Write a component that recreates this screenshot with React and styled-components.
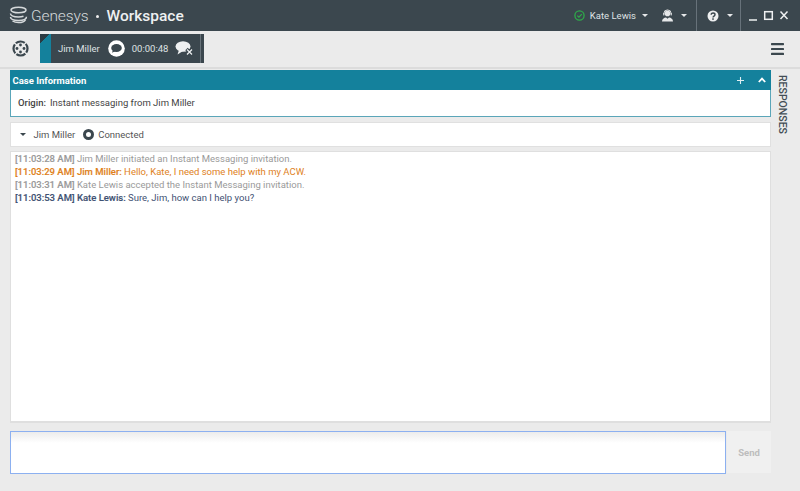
import React from "react";
import styled, { createGlobalStyle } from "styled-components";

const Global = createGlobalStyle`
  html, body {
    margin: 0;
    padding: 0;
    background: #ebebeb;
  }
  * {
    box-sizing: border-box;
  }
  body {
    font-family: Roboto, "Liberation Sans", sans-serif;
    font-size: 9.5px;
    overflow: hidden;
  }
`;

const Page = styled.div`
  width: 800px;
  height: 491px;
  display: flex;
  flex-direction: column;
  background: #ebebeb;
`;

const TopBar = styled.header`
  height: 31px;
  flex: none;
  display: flex;
  align-items: stretch;
  background: #3b474e;
  color: #e6e8e9;
`;

const Brand = styled.div`
  display: flex;
  align-items: center;
  padding-left: 9px;
  flex: 1;
`;

const BrandName = styled.span`
  font-size: 15.5px;
  font-weight: 300;
  margin-left: 2px;
  color: #d5d9db;
  letter-spacing: -0.1px;
`;

const BrandDot = styled.span`
  width: 3px;
  height: 3px;
  border-radius: 50%;
  background: #eee;
  margin: 2px 8px 0 7px;
`;

const Product = styled.span`
  font-size: 15.5px;
  font-weight: 500;
  color: #eef0f1;
`;

const TopGroup = styled.div`
  display: flex;
  align-items: center;
  padding: 0 ${(p) => p.$right || 0}px 0 ${(p) => p.$left || 0}px;
  border-left: ${(p) => (p.$divided ? "1px solid #67727a" : "none")};
`;

const UserName = styled.span`
  font-size: 9.5px;
  font-weight: 400;
  color: #dfe2e4;
  margin: 0 6px 0 5px;
`;

const Caret = styled.span`
  display: inline-block;
  width: 0;
  height: 0;
  border-left: 3px solid transparent;
  border-right: 3px solid transparent;
  border-top: 3px solid ${(p) => p.$color || "#e6e8e9"};
  margin-left: ${(p) => p.$left || 0}px;
  margin-right: ${(p) => p.$right || 0}px;
`;

const ToolBar = styled.div`
  height: 38px;
  flex: none;
  display: flex;
  align-items: center;
  padding: 0 16px 1px 12px;
  background: #ebebeb;
  border-bottom: 2px solid #dcdcdc;
`;

const Interaction = styled.div`
  margin-left: 11px;
  height: 29px;
  width: 164px;
  display: flex;
  align-items: center;
  background: #3b474e;
  color: #dfe2e4;
  position: relative;
`;

const TealTab = styled.div`
  width: 11px;
  align-self: stretch;
  background: linear-gradient(135deg, #2b3a42 0 7px, #14819c 7px);
`;

const CallerName = styled.span`
  font-size: 9.5px;
  font-weight: 400;
  margin: 0 8px 0 7px;
`;

const Timer = styled.span`
  font-size: 9.5px;
  margin: 0 7px 0 7px;
`;

const TabEdge = styled.span`
  position: absolute;
  right: 3px;
  top: 0;
  bottom: 0;
  width: 1px;
  background: #68737a;
`;

const Spacer = styled.div`
  flex: 1;
`;

const Main = styled.div`
  flex: 1;
  display: flex;
  min-height: 0;
`;

const Content = styled.div`
  width: 771px;
  padding: 1px 0 17px 9.5px;
  display: flex;
  flex-direction: column;
`;

const CaseHeader = styled.div`
  height: 20px;
  flex: none;
  background: #14819c;
  color: #fff;
  font-size: 9.5px;
  font-weight: 700;
  display: flex;
  align-items: center;
  justify-content: space-between;
  padding: 0 5px 0 3px;
`;

const CaseBody = styled.div`
  height: 27px;
  flex: none;
  background: #fff;
  border: 1px solid #5ba6b9;
  border-top: none;
  color: #444;
  font-size: 9.5px;
  display: flex;
  align-items: center;
  padding: 0 0 1px 7.5px;
  margin-bottom: 5px;
`;

const OriginLabel = styled.b`
  font-weight: 500;
  margin-right: 4px;
`;

const HeaderActions = styled.div`
  display: flex;
  align-items: center;
  gap: 14px;
`;

const PartyRow = styled.div`
  height: 25px;
  flex: none;
  background: #fff;
  border: 1px solid #e0e0e0;
  color: #555;
  font-size: 9.5px;
  display: flex;
  align-items: center;
  padding: 0 0 1px 8px;
  margin-bottom: 4px;
`;

const PartyName = styled.span`
  margin: 0 8px 0 8px;
`;

const Ring = styled.span`
  width: 11px;
  height: 11px;
  border-radius: 50%;
  border: 3px solid #3b474e;
  margin-right: 4px;
`;

const Transcript = styled.div`
  height: 272px;
  flex: none;
  background: #fff;
  border: 1px solid #dfdfdf;
  border-bottom-width: 2px;
  padding: 0 4.5px;
  margin-bottom: 8px;
  font-size: 9.5px;
  line-height: 13px;
`;

const Line = styled.div`
  color: ${(p) => p.$color};
  height: 13px;
  white-space: nowrap;
`;

const Strong = styled.b`
  font-weight: 500;
  -webkit-text-stroke: 0.15px currentColor;
`;

const Composer = styled.div`
  display: flex;
  height: 43px;
  gap: 1px;
`;

const MessageBox = styled.div`
  width: 716.5px;
  background: linear-gradient(#ececec 0, #fff 11px);
  border: 1px solid #8cb0f0;
`;

const SendButton = styled.button`
  width: 44px;
  height: 42px;
  border: none;
  background: #f0f0f0;
  color: #bdbdbd;
  font-family: inherit;
  font-size: 9.5px;
  font-weight: 700;
  padding: 0;
`;

const ResponsesRail = styled.div`
  flex: 1;
  position: relative;
`;

const ResponsesLabel = styled.span`
  position: absolute;
  left: 5px;
  top: 6px;
  writing-mode: vertical-rl;
  font-size: 10.5px;
  font-weight: 500;
  color: #434e55;
`;

const LogoIcon = () => (
  <svg width="20" height="19" viewBox="0 0 20 19" fill="none" stroke="#d5d9db" strokeWidth="1.500">
    <ellipse cx="9.500" cy="4" rx="7.500" ry="2.800" />
    <path d="M1.500 7.500c0 2.200 3.500 3.400 8 3.400 2 0 3.500-.2 5-.7" />
    <path d="M1.500 11c0 2.200 3.500 3.400 8 3.400 3.500 0 8-1 8-3.700" />
    <path d="M3.500 15c1.500 1 3.500 1.600 6 1.600 3 0 6-1 7-3" />
  </svg>
);

const StatusIcon = () => (
  <svg width="11" height="11" viewBox="0 0 11 11" fill="none" stroke="#2eab4a" strokeWidth="1.300">
    <circle cx="5.500" cy="5.500" r="4.600" />
    <path d="M3.300 5.600l1.600 1.500 2.900-3" />
  </svg>
);

const AgentIcon = () => (
  <svg width="13" height="13" viewBox="0 0 13 13" fill="#e6e8e9">
    <circle cx="6.500" cy="4.400" r="2.800" />
    <path d="M2.800 4.600a3.700 3.700 0 0 1 7.400 0" fill="none" stroke="#e6e8e9" strokeWidth="0.900" />
    <rect x="2.200" y="4" width="1.200" height="2.400" />
    <rect x="9.600" y="4" width="1.200" height="2.400" />
    <path d="M1 12.500c0-2.500 2-3.800 4-4l1.500 1.300L8 8.500c2 .2 4 1.500 4 4z" />
  </svg>
);

const HelpIcon = () => (
  <svg width="12" height="12" viewBox="0 0 12 12">
    <circle cx="6" cy="6" r="5.500" fill="#eef0f1" />
    <path d="M4.200 4.700c0-2.300 3.800-2.200 3.800 0 0 1.400-2 1.400-2 2.800" fill="none" stroke="#3b474e" strokeWidth="1.400" />
    <rect x="5.200" y="8.300" width="1.600" height="1.500" fill="#3b474e" />
  </svg>
);

const WindowIcons = () => (
  <svg width="40" height="11" viewBox="0 0 40 11" fill="none" stroke="#eef0f1">
    <path d="M0 10h8" strokeWidth="1.500" />
    <rect x="15.700" y="1.700" width="7.600" height="7.600" strokeWidth="1.500" />
    <path d="M31.500 1.500l7 7.500M38.500 1.500l-7 7.500" strokeWidth="1.500" />
  </svg>
);

const DialIcon = () => (
  <svg width="17" height="17" viewBox="0 0 17 17">
    <circle cx="8.500" cy="8.500" r="7" fill="none" stroke="#3b474e" strokeWidth="2.200" strokeDasharray="9.600 1.400" strokeDashoffset="5.300" />
    <circle cx="8.500" cy="5" r="1.400" fill="#3b474e" />
    <circle cx="8.500" cy="12" r="1.400" fill="#3b474e" />
    <circle cx="5" cy="8.500" r="1.400" fill="#3b474e" />
    <circle cx="12" cy="8.500" r="1.400" fill="#3b474e" />
  </svg>
);

const ChatIcon = () => (
  <svg width="17" height="17" viewBox="0 0 17 17">
    <circle cx="8.500" cy="8.500" r="8.300" fill="#fff" />
    <ellipse cx="8.500" cy="8" rx="5.300" ry="4" fill="#3b474e" />
    <path d="M5 9.500l-1 3.300 3.700-1.700z" fill="#3b474e" />
  </svg>
);

const EndChatIcon = () => (
  <svg width="19" height="15" viewBox="0 0 19 15">
    <ellipse cx="8" cy="5.500" rx="7.500" ry="5.200" fill="#eef0f1" />
    <path d="M4 9l-1.500 4.500L8 10z" fill="#eef0f1" />
    <path d="M11.500 8l6 6M17.500 8l-6 6" stroke="#3b474e" strokeWidth="3.500" />
    <path d="M12 8.500l5 5M17 8.500l-5 5" stroke="#eef0f1" strokeWidth="1.200" />
  </svg>
);

const MenuIcon = () => (
  <svg width="13" height="12" viewBox="0 0 13 12" fill="#3b474e">
    <rect y="0" width="13" height="2.200" rx="0.600" />
    <rect y="4.900" width="13" height="2.200" rx="0.600" />
    <rect y="9.800" width="13" height="2.200" rx="0.600" />
  </svg>
);

const PlusIcon = () => (
  <svg width="7" height="7" viewBox="0 0 7 7" stroke="#dfeef2" strokeWidth="1.100">
    <path d="M3.500 0v7M0 3.500h7" />
  </svg>
);

const ChevronIcon = () => (
  <svg width="8" height="6" viewBox="0 0 8 6" fill="none" stroke="#fff" strokeWidth="1.800">
    <path d="M.8 5L4 1.600 7.200 5" />
  </svg>
);

export default function App() {
  return (
    <Page>
      <Global />
      <TopBar>
        <Brand>
          <LogoIcon />
          <BrandName>Genesys</BrandName>
          <BrandDot />
          <Product>Workspace</Product>
        </Brand>
        <TopGroup>
          <StatusIcon />
          <UserName>Kate Lewis</UserName>
          <Caret $right={13} />
          <AgentIcon />
          <Caret $left={7} $right={9} />
        </TopGroup>
        <TopGroup $divided $left={10} $right={7}>
          <HelpIcon />
          <Caret $left={8} />
        </TopGroup>
        <TopGroup $divided $left={8} $right={11}>
          <WindowIcons />
        </TopGroup>
      </TopBar>
      <ToolBar>
        <DialIcon />
        <Interaction>
          <TealTab />
          <CallerName>Jim Miller</CallerName>
          <ChatIcon />
          <Timer>00:00:48</Timer>
          <EndChatIcon />
          <TabEdge />
        </Interaction>
        <Spacer />
        <MenuIcon />
      </ToolBar>
      <Main>
        <Content>
          <CaseHeader>
            Case Information
            <HeaderActions>
              <PlusIcon />
              <ChevronIcon />
            </HeaderActions>
          </CaseHeader>
          <CaseBody>
            <OriginLabel>Origin:</OriginLabel> Instant messaging from Jim Miller
          </CaseBody>
          <PartyRow>
            <Caret $color="#3b474e" $left={1} />
            <PartyName>Jim Miller</PartyName>
            <Ring />
            Connected
          </PartyRow>
          <Transcript>
            <Line $color="#9a9a9a">
              <Strong>[11:03:28 AM]</Strong> Jim Miller initiated an Instant Messaging invitation.
            </Line>
            <Line $color="#e0811c">
              <Strong>[11:03:29 AM] Jim Miller:</Strong> Hello, Kate, I need some help with my ACW.
            </Line>
            <Line $color="#9a9a9a">
              <Strong>[11:03:31 AM]</Strong> Kate Lewis accepted the Instant Messaging invitation.
            </Line>
            <Line $color="#3f5273">
              <Strong>[11:03:53 AM] Kate Lewis:</Strong> Sure, Jim, how can I help you?
            </Line>
          </Transcript>
          <Composer>
            <MessageBox />
            <SendButton>Send</SendButton>
          </Composer>
        </Content>
        <ResponsesRail>
          <ResponsesLabel>RESPONSES</ResponsesLabel>
        </ResponsesRail>
      </Main>
    </Page>
  );
}
